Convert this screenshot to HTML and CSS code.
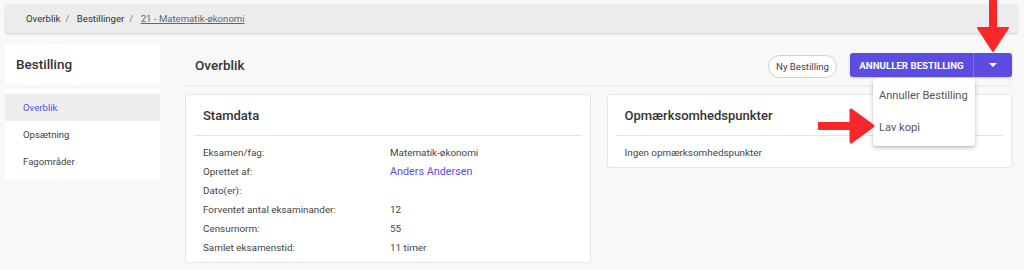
FILE: index.html
```html
<!DOCTYPE html>
<html lang="da">

<head>
    <meta charset="UTF-8">
    <meta name="viewport" content="width=device-width, initial-scale=1.0">
    <title>Bestilling - Overblik</title>
    <link rel="stylesheet" href="styles.css">
</head>

<body>
    <div class="crumbs">
        <a href="#">Overblik</a><span class="sep">/</span>
        <a href="#">Bestillinger</a><span class="sep">/</span>
        <a href="#" class="current">21 - Matematik-økonomi</a>
    </div>

    <div class="layout">
        <aside class="side">
            <div class="side-head">Bestilling</div>
            <ul class="side-menu">
                <li class="active">Overblik</li>
                <li>Opsætning</li>
                <li>Fagområder</li>
            </ul>
        </aside>

        <main class="main">
            <div class="main-head">
                <h1>Overblik</h1>
                <div class="actions">
                    <button class="pill">Ny Bestilling</button>
                    <div class="split">
                        <button class="split-main">Annuller bestilling</button>
                        <button class="split-toggle"><span class="caret"></span></button>
                        <ul class="dropdown">
                            <li>Annuller Bestilling</li>
                            <li>Lav kopi</li>
                        </ul>
                    </div>
                </div>
            </div>

            <div class="cards">
                <div class="card">
                    <h2>Stamdata</h2>
                    <div class="rows">
                        <div class="row"><span>Eksamen/fag:</span><span>Matematik-økonomi</span></div>
                        <div class="row"><span>Oprettet af:</span><a href="#">Anders Andersen</a></div>
                        <div class="row"><span>Dato(er):</span><span></span></div>
                        <div class="row"><span>Forventet antal eksaminander:</span><span>12</span></div>
                        <div class="row"><span>Censurnorm:</span><span>55</span></div>
                        <div class="row"><span>Samlet eksamenstid:</span><span>11 timer</span></div>
                    </div>
                </div>
                <div class="card">
                    <h2>Opmærksomhedspunkter</h2>
                    <div class="rows">
                        <div class="row single">Ingen opmærksomhedspunkter</div>
                    </div>
                </div>
            </div>
        </main>
    </div>

    <!-- markup arrows -->
    <svg class="arrow arrow-down" width="34" height="52" viewBox="0 0 34 52">
        <rect x="13" y="0" width="8" height="30" fill="#f7272a"/>
        <path d="M2 28 L32 28 L17 51 Z" fill="#f7272a" stroke="#f7272a" stroke-width="2" stroke-linejoin="round"/>
    </svg>
    <svg class="arrow arrow-right" width="58" height="38" viewBox="0 0 58 38">
        <rect x="0" y="15" width="35" height="8" fill="#f7272a"/>
        <path d="M33 3 L33 35 L55 19 Z" fill="#f7272a" stroke="#f7272a" stroke-width="3" stroke-linejoin="round"/>
    </svg>
</body>

</html>
```

FILE: styles.css
```css
* {
    margin: 0;
    padding: 0;
    box-sizing: border-box;
}

body {
    background-color: #f8f8f8;
    font-family: Roboto, "Liberation Sans", Arial, sans-serif;
    color: #444;
    font-size: 10px;
    position: relative;
    height: 270px;
    overflow: hidden;
}

a {
    text-decoration: none;
    color: inherit;
}

ul {
    list-style: none;
}

/* breadcrumb bar */
.crumbs {
    margin: 4px 6px 0 5px;
    height: 29px;
    line-height: 29px;
    padding-left: 21px;
    background-color: #ececec;
    border-radius: 4px;
    box-shadow: 0 1px 2px rgba(0, 0, 0, 0.18);
    font-size: 9.6px;
    color: #333;
}

.crumbs .sep {
    margin: 0 5px;
    color: #777;
}

.crumbs .current {
    color: #666;
    text-decoration: underline;
}

.layout {
    display: flex;
    margin-top: 11px;
    padding: 0 12px 0 5px;
}

/* sidebar */
.side {
    width: 155px;
    flex-shrink: 0;
}

.side-head {
    background-color: #fff;
    height: 41px;
    line-height: 41px;
    padding-left: 11px;
    font-size: 13.5px;
    font-weight: 500;
    color: #333;
}

.side-menu {
    background-color: #fff;
    margin-top: 4px;
    padding: 5px 0;
}

.side-menu li {
    height: 27px;
    line-height: 27px;
    padding-left: 18px;
    font-size: 9.6px;
    color: #444;
}

.side-menu li.active {
    background-color: #eeeeee;
    color: #5b4de0;
}

/* main */
.main {
    flex: 1;
    margin-left: 25px;
}

.main-head {
    display: flex;
    align-items: center;
    justify-content: space-between;
    height: 43px;
    border-bottom: 2px solid #efefef;
    padding-left: 10px;
}

.main-head h1 {
    font-size: 13.5px;
    font-weight: 500;
    color: #333;
}

.actions {
    display: flex;
    align-items: center;
    gap: 13px;
    padding-top: 1px;
}

.pill {
    font-family: inherit;
    font-size: 9.6px;
    color: #444;
    background-color: #fff;
    border: 1px solid #cfcfcf;
    border-radius: 12px;
    height: 23px;
    padding: 0 7px;
    margin-top: 2px;
}

.split {
    position: relative;
    display: flex;
    height: 24px;
    border-radius: 3px;
    background-color: #5b4de0;
    box-shadow: 0 1px 2px rgba(0, 0, 0, 0.2);
}

.split button {
    font-family: inherit;
    border: none;
    background: none;
    color: #fff;
    cursor: pointer;
}

.split-main {
    width: 124px;
    font-size: 9.7px;
    font-weight: 700;
    text-transform: uppercase;
    border-right: 1px solid #7a6fe6 !important;
}

.split-toggle {
    width: 38px;
    display: flex;
    align-items: center;
    justify-content: center;
}

.caret {
    width: 0;
    height: 0;
    border-left: 4px solid transparent;
    border-right: 4px solid transparent;
    border-top: 4px solid #fff;
}

.dropdown {
    position: absolute;
    left: 23px;
    top: 25px;
    width: 102px;
    padding: 2px 0;
    background-color: #fff;
    border-radius: 3px;
    box-shadow: rgba(0, 0, 0, 0.2) 0px 2px 5px, rgba(0, 0, 0, 0.12) 0px 1px 2px;
    z-index: 2;
}

.dropdown li {
    height: 32px;
    line-height: 32px;
    padding-left: 6px;
    font-size: 11.1px;
    color: #555;
    white-space: nowrap;
}

/* cards */
.cards {
    display: grid;
    grid-template-columns: 1fr 1fr;
    gap: 16px;
    margin-top: 7px;
    align-items: start;
}

.card {
    background-color: #fff;
    border: 1px solid #e6e6e6;
    border-radius: 3px;
    padding-bottom: 5px;
}

.card h2 {
    font-size: 13px;
    font-weight: 500;
    color: #333;
    height: 41px;
    line-height: 41px;
    margin: 0 8px;
    padding-left: 9px;
    border-bottom: 1px solid #e4e4e4;
}

.rows {
    padding: 7px 0 0 17px;
}

.row {
    display: grid;
    grid-template-columns: 187px 1fr;
    height: 19px;
    line-height: 19px;
    font-size: 9.9px;
    color: #444;
}

.row.single {
    display: block;
}

.row a {
    color: #5b4de0;
    font-size: 10.8px;
}

/* red markup arrows */
.arrow {
    position: absolute;
    z-index: 5;
}

.arrow-down {
    left: 976px;
    top: 0;
}

.arrow-right {
    left: 818px;
    top: 107px;
}
```
